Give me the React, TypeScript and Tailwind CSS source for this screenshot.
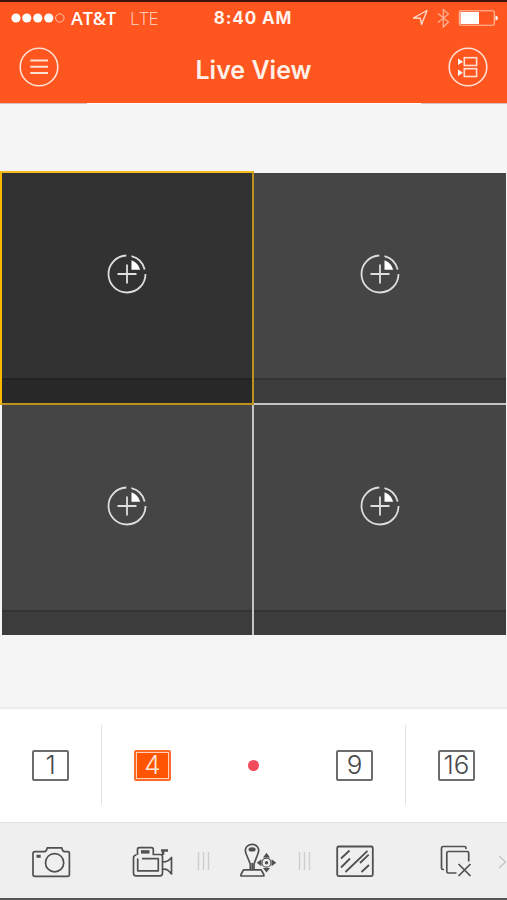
import React from 'react';
import { clsx } from 'clsx';

const DARK = '#505050';

function StatusBar() {
  return (
    <div className="flex h-[32px] items-center justify-between pl-[11px] pr-[9px] text-white">
      <div className="flex w-[180px] items-center">
        <svg width="54" height="12" viewBox="0 0 54 12" fill="#fff">
          <circle cx="5" cy="6" r="4.6" />
          <circle cx="15.8" cy="6" r="4.6" />
          <circle cx="26.8" cy="6" r="4.6" />
          <circle cx="37.8" cy="6" r="4.6" />
          <circle cx="48.8" cy="6" r="4.2" fill="none" stroke="#ffc4ac" strokeWidth="1" />
        </svg>
        <span className="ml-[6px] w-[47px] whitespace-nowrap font-['Open_Sans'] text-[18px] leading-none font-semibold tracking-[-0.1px]">AT&amp;T</span>
        <span className="ml-[12px] font-['Open_Sans'] text-[18px] leading-none font-light tracking-[-0.1px] text-[#ffd9cb]">LTE</span>
      </div>
      <span className="-ml-[3px] font-['Inter'] text-[17px] leading-none font-bold tracking-[0.9px] whitespace-nowrap text-[#fff4ee]">8:40 AM</span>
      <div className="flex w-[180px] justify-end">
        <svg width="86" height="24" viewBox="412 6 86 24" fill="none">
          <path d="M413.5 18L427 10.5L421.5 24.5L420.3 18.3Z" stroke="#ffd9cb" strokeWidth="1.4" strokeLinejoin="round" />
          <path d="M438 13.5L448.5 22L443.3 27V9.5L448.5 14L438 22.5" stroke="#ffb497" strokeWidth="1.2" />
          <rect x="459.3" y="10.8" width="35" height="14.4" rx="1.5" stroke="#ffc4ac" strokeWidth="1.1" />
          <rect x="460.5" y="12" width="18.5" height="12" fill="#fff" />
          <path d="M495.5 15.5Q498 16 498 18Q498 20 495.5 20.5Z" fill="#fff" />
        </svg>
      </div>
    </div>
  );
}

function Header() {
  return (
    <header className="h-[104px] bg-[#ff551f]">
      <div className="h-[2px] bg-[#401105]" />
      <StatusBar />
      <div className="flex h-[69px] items-start justify-between px-[18px] pt-[12px]">
        <svg width="42" height="42" viewBox="0 0 42 42" fill="none" stroke="#ffe0d3">
          <circle cx="21" cy="21" r="18.8" strokeWidth="1.6" />
          <path d="M12.3 14.5H30M12.3 20.7H30M12.3 27H30" strokeWidth="2" />
        </svg>
        <h1 className="mt-[10px] font-['Inter'] text-[25px] leading-[28px] font-semibold text-[#fff0e8]">Live View</h1>
        <svg width="42" height="42" viewBox="0 0 42 42" fill="none" stroke="#ffe0d3">
          <circle cx="21" cy="21" r="18.8" strokeWidth="1.6" />
          <rect x="17.3" y="11.7" width="12.3" height="7.8" strokeWidth="1.6" />
          <rect x="17.3" y="22.7" width="12.3" height="7.8" strokeWidth="1.6" />
          <path d="M11 12.5L16 15.7L11 19ZM11 23.5L16 26.7L11 30Z" fill="#fff" stroke="none" />
        </svg>
      </div>
      <div className="flex h-px justify-between bg-white">
        <div className="w-[87px] bg-[#d8c2ba]" />
        <div className="w-[86px] bg-[#d8c2ba]" />
      </div>
    </header>
  );
}

function AddIcon() {
  return (
    <svg width="42" height="42" viewBox="0 0 42 42" fill="none" stroke="#dedede">
      <path d="M20.3 2.5A18.5 18.5 0 1 0 39.5 21" strokeWidth="1.8" />
      <path d="M25.5 3.2A18.5 18.5 0 0 1 38.7 16.5" strokeWidth="1.8" />
      <path d="M21 11.5V30.5M11.5 21H30.5" strokeWidth="1.8" />
      <path d="M25.5 7.3A14.5 14.5 0 0 1 34.2 16.7H25.5Z" fill="#fff" stroke="none" />
    </svg>
  );
}

function Camera({ active = false, className }: { active?: boolean; className?: string }) {
  return (
    <div className={clsx('flex flex-col', active ? 'bg-[#323232]' : 'bg-[#454545]', className)}>
      <div className="flex flex-1 items-center justify-center pb-[4px]">
        <AddIcon />
      </div>
      <div className={clsx('h-[25px] border-t-2', active ? 'border-[#222] bg-[#282828]' : 'border-[#343434] bg-[#3c3c3c]')} />
    </div>
  );
}

const layouts = [
  { n: '1' },
  { n: '4', active: true },
  { n: '' },
  { n: '9' },
  { n: '16' },
];

function LayoutBar() {
  return (
    <div className="flex h-[115px] items-start border-t-2 border-[#ececec] bg-white pt-[16px]">
      {layouts.map(({ n, active }, i) => (
        <div
          key={i}
          className={clsx(
            'flex h-[80px] flex-1 items-center justify-center',
            i === 0 && 'border-r border-[#e2e2e2]',
            i === 4 && 'border-l border-[#e2e2e2]',
          )}
        >
          {n === '' ? (
            <div className="h-[11px] w-[11px] rounded-full bg-[#f04a5c]" />
          ) : (
            <div
              className={clsx(
                "flex h-[31px] w-[37px] items-center justify-center rounded-[2px] border-2 font-['Inter'] text-[26px] leading-none font-light",
                active
                  ? 'border-[#ff6a2b] bg-[#ff5500] text-[#ffe6d8] outline-1 -outline-offset-3 outline-[#ffd2b8]'
                  : 'border-[#6c6c6c] text-[#484848]',
              )}
            >
              {n}
            </div>
          )}
        </div>
      ))}
    </div>
  );
}

function Grip() {
  return (
    <svg className="absolute top-[28px] -right-[7px]" width="13" height="20" viewBox="0 0 13 20" stroke="#cecece" strokeWidth="1.4">
      <path d="M1.5 1V19M6.5 1V19M11.5 1V19" />
    </svg>
  );
}

const tools = [
  // snapshot
  <svg width="44" height="40" viewBox="29 842 44 40" fill="none" stroke={DARK} strokeWidth="1.7">
    <path d="M35 851.7H44.5Q46.5 851.5 47.2 847.8H61.8Q62.5 851.5 64.5 851.7H67.5Q69.4 851.7 69.4 853.7V874.5Q69.4 876.3 67.5 876.3H35Q33 876.3 33 874.5V853.7Q33 851.7 35 851.7Z" strokeLinejoin="round" />
    <circle cx="54.6" cy="862.7" r="9.1" />
    <rect x="36.5" y="854.8" width="4.2" height="3" fill={DARK} stroke="none" />
  </svg>,
  // record
  <svg width="44" height="40" viewBox="130.5 842 44 40" fill="none" stroke={DARK} strokeWidth="1.7" strokeLinejoin="round">
    <path d="M138 855V849.5Q138 847.7 139.8 847.7H152Q153.8 847.7 153.8 849.5V854.5H161Q163 854.5 163 857V861.5Q167.5 863 172 857.5V874Q167.5 868 163 869.5V873Q163 875.8 160.5 875.8H136.5Q134 875.8 134 873V858Q134 855 137 855" />
    <path d="M142.5 858.6H158.8V870.8H138.2V858.6" />
    <path d="M163 861.5V869.5" />
    <path d="M141.5 851.9H150" strokeWidth="3.4" />
    <path d="M161.5 850.6H168.5M163.5 851.5V855" strokeWidth="2.5" />
  </svg>,
  // pan / tilt
  <svg className="ml-[8px]" width="44" height="40" viewBox="236 842 44 40" fill="none" stroke={DARK} strokeWidth="1.7" strokeLinejoin="round">
    <path d="M250.3 869.5V864L246 853.5C243.8 847.5 248 844.4 252 844.4S260.3 847.5 258 853.5L254 864V869.5" />
    <path d="M252.2 863V870" />
    <path d="M243.5 869.8H261.2L263.8 874.5V876H241V874.5Z" />
    <ellipse cx="252.1" cy="849.4" rx="3.6" ry="2.2" fill={DARK} stroke="none" />
    <circle cx="266.5" cy="862.7" r="4.5" strokeWidth="1.2" />
    <circle cx="266.5" cy="862.7" r="1.7" fill={DARK} stroke="none" />
    <path d="M266.5 852.8L270 857.5H263ZM266.5 872.6L270 867.9H263ZM256.7 862.7L261.4 859.2V866.2ZM276.3 862.7L271.6 859.2V866.2Z" fill={DARK} stroke="none" />
  </svg>,
  // image quality
  <svg width="44" height="40" viewBox="333 842 44 40" fill="none" stroke={DARK} strokeWidth="1.8">
    <rect x="337.2" y="846.5" width="35.6" height="29.6" rx="1.5" />
    <path d="M341 858.5L349.5 850.5M341 867.5L350 858.5M345.5 872L367.5 850.8M360 863L368.7 854.7M361.5 872L369 865" />
  </svg>,
  // close all
  <svg width="44" height="40" viewBox="434.5 842 44 40" fill="none" stroke={DARK} strokeWidth="1.7">
    <path d="M444.5 869.5H443.5Q442 869.5 442 868V848Q442 846.5 443.5 846.5H465Q466.5 846.5 466.5 848V849" />
    <path d="M457 873H448.8Q447.3 873 447.3 871.5V853Q447.3 851.5 448.8 851.5H467.7Q469.2 851.5 469.2 853V861.5" />
    <path d="M459 864L471 876M471 864L459 876" />
  </svg>,
];

function Toolbar() {
  return (
    <div className="relative flex h-[76px] border-t border-[#e2e2e2] bg-[#efefef]">
      {tools.map((icon, i) => (
        <div key={i} className="relative flex flex-1 items-center justify-center pt-[2px]">
          {icon}
          {(i === 1 || i === 2) && <Grip />}
        </div>
      ))}
      <svg className="absolute top-[32px] right-0" width="9" height="14" viewBox="0 0 9 14" fill="none" stroke="#c4c4c4" strokeWidth="1.3">
        <path d="M1 1L7.5 7L1 13" />
      </svg>
    </div>
  );
}

export default function App() {
  return (
    <div className="flex h-[900px] w-[507px] flex-col overflow-hidden bg-[#f5f5f5]">
      <Header />
      <main className="flex-1 pt-[67px]">
        <div className="grid h-[464px] grid-cols-[254px_252px] grid-rows-[234px_230px] bg-[#f5f5f5]">
          <Camera active className="border-2 border-t-[#f3bd20] border-r-[#bd931d] border-b-[#bd931d] border-l-[#fbb800]" />
          <Camera className="mt-[2px] border-b-2 border-[#c4c4c4]" />
          <Camera className="ml-[2px] border-r-2 border-[#c4c4c4]" />
          <Camera />
        </div>
      </main>
      <LayoutBar />
      <Toolbar />
      <div className="h-[2px] bg-[#555]" />
    </div>
  );
}
